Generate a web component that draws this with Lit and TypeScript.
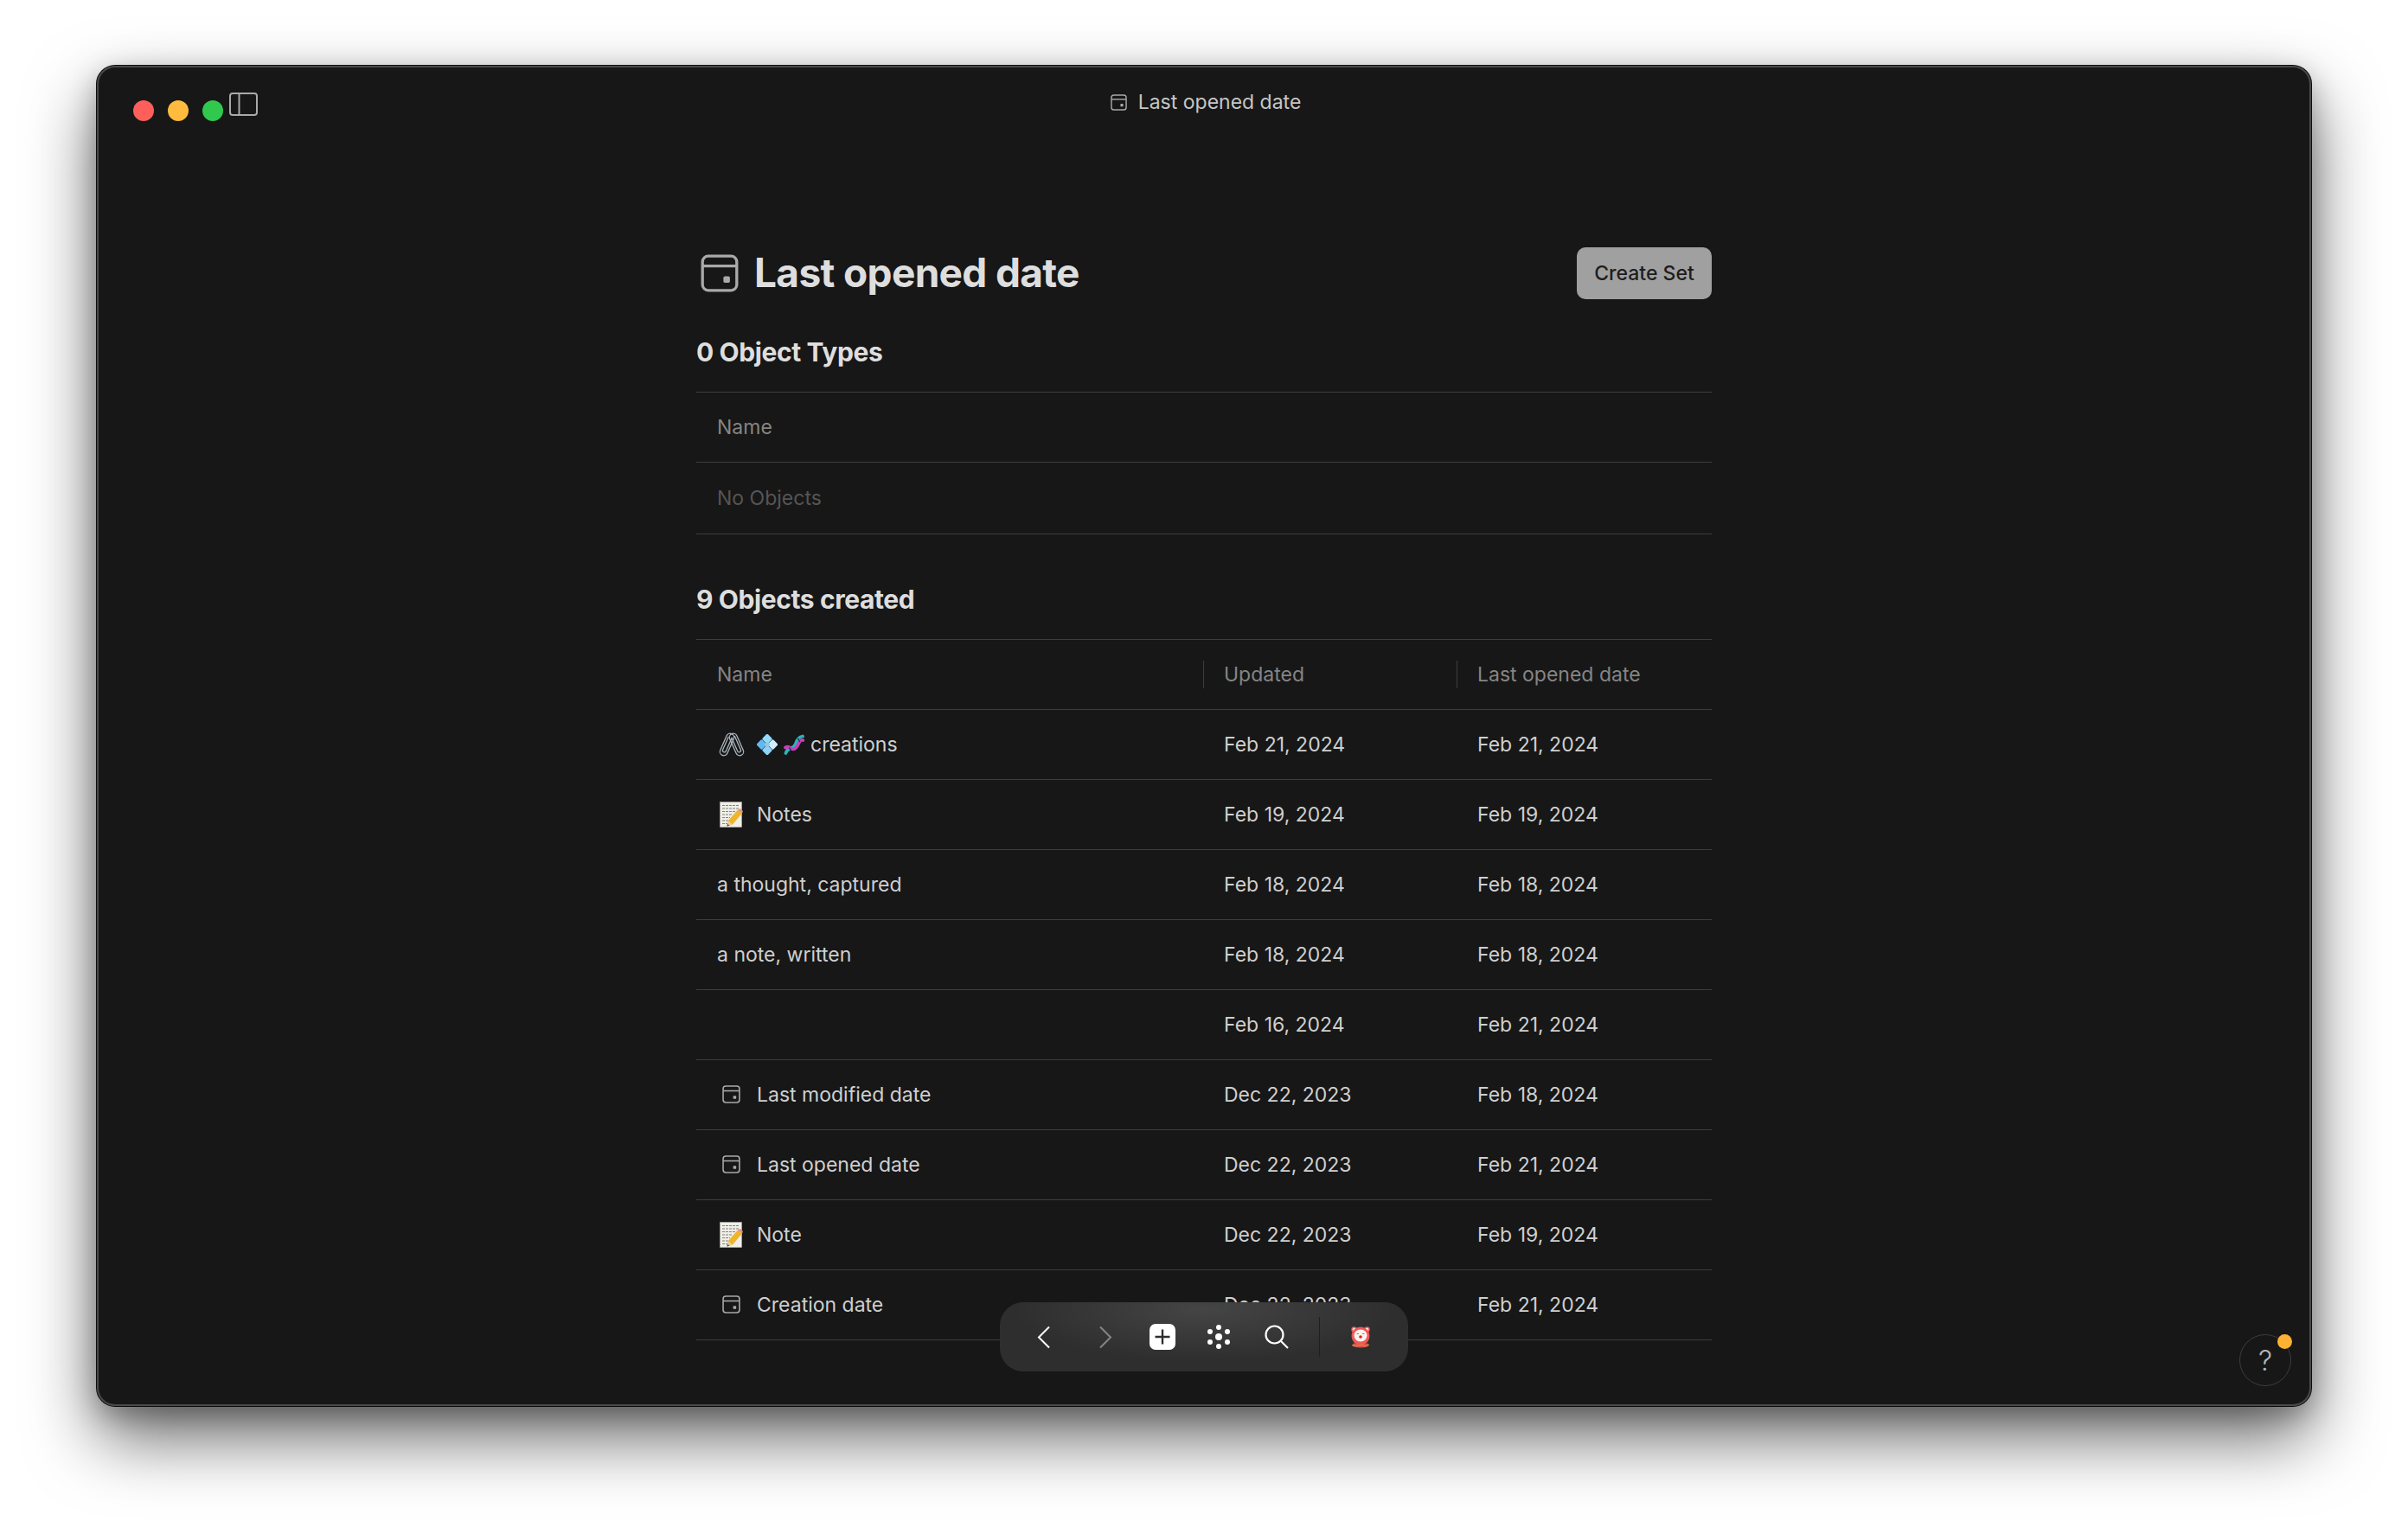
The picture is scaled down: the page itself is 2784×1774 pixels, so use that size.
import { LitElement, html, css, svg } from "lit";
import { customElement } from "lit/decorators.js";

const dateIcon = (cls: string) => html`<svg class=${cls} viewBox="0 0 20 20" fill="none">
  <rect x="1" y="1" width="18" height="18" rx="3" stroke="currentColor" stroke-width="1.5"/>
  <path d="M1 6.200H19" stroke="currentColor" stroke-width="1.5"/>
  <rect x="12" y="11.600" width="3.400" height="3.400" rx=".8" fill="currentColor"/>
</svg>`;

const memo = html`<svg class="memo" viewBox="0 0 27 30">
  <rect x=".5" y=".5" width="25" height="29" fill="#efeee8" stroke="#b5b3a8" stroke-width=".6"/>
  <path d="M3 4.500h19M3 8h20M3 11.500h16M3 15h12M3 18.500h9M3 22h7M3 25.500h8" stroke="#77756e" stroke-width=".9" stroke-dasharray="3 1"/>
  <path d="M21 9.500l5 4-11 13-6.500 2 1.500-6.500z" fill="#f0b429"/>
  <path d="M21 9.500l2.500-1.500 3.500 3-1 2.500z" fill="#e58a8a"/>
  <path d="M8.500 28.500l1.500-6.500 4.800 4.500z" fill="#e8cfa0"/>
  <path d="M8.500 28.500l.6-2.700 2.100 2z" fill="#444"/>
</svg>`;

const clipShape = svg`<rect x="-4.500" y="-13.500" width="9" height="27" rx="4.500"/><path d="M-2 -8.500V7.500a2 2 0 0 0 4 0V-9.500"/>`;
const clips = html`<svg class="clips" viewBox="0 0 30 28" fill="none" stroke="#a9b5bf" stroke-width="1.300" stroke-linecap="round">
  <g transform="translate(9.500 14) rotate(24)">${clipShape}</g>
  <g transform="translate(20.500 14) rotate(-24)">${clipShape}</g>
</svg>`;

const diamond = html`<svg class="emo" viewBox="0 0 24 24">
  <g transform="rotate(45 12 12)">
    <rect x="3" y="3" width="8.800" height="8.800" rx="1.500" fill="#8fdcff"/>
    <rect x="12.200" y="3" width="8.800" height="8.800" rx="1.500" fill="#cdf0ff"/>
    <rect x="3" y="12.200" width="8.800" height="8.800" rx="1.500" fill="#62b9f2"/>
    <rect x="12.200" y="12.200" width="8.800" height="8.800" rx="1.500" fill="#8fd2fa"/>
    <rect x="9.500" y="9.500" width="5" height="5" fill="#9fc4dc"/>
  </g>
</svg>`;

const dna = html`<svg class="emo" viewBox="0 0 24 24" fill="none" stroke-linecap="round">
  <path d="M2.500 22C5 14 12 18 14 11S19 3 22 2.500" stroke="#27b6bb" stroke-width="3.800"/>
  <path d="M2 15.500C8 12 9 21 14 16S17 6 22.500 7" stroke="#c83fb8" stroke-width="3.800"/>
  <path d="M16.500 5l2 3.500M6.500 16l2 2.500" stroke="#263a55" stroke-width="1.500"/>
</svg>`;

const bear = html`<svg class="bear" viewBox="0 0 22 25">
  <circle cx="3.500" cy="3.500" r="3.200" fill="#ee5a5a"/><circle cx="18.500" cy="3.500" r="3.200" fill="#ee5a5a"/>
  <circle cx="3.500" cy="3.200" r="1.700" fill="#fbe9e4"/><circle cx="18.500" cy="3.200" r="1.700" fill="#fbe9e4"/>
  <path d="M3 19.500h16c2.500 2 1.500 5-8 5s-10.500-3-8-5z" fill="#dd4f4d"/>
  <circle cx="11" cy="11" r="10.500" fill="#ee5a5a"/>
  <ellipse cx="11" cy="10.500" rx="7.500" ry="7" fill="#fdf3ee"/>
  <path d="M6.500 8.500h2.500M13 8.500h2.500" stroke="#666" stroke-width=".8"/>
  <circle cx="11" cy="12" r="1.800" fill="#d92323"/>
  <path d="M1 21.500c3 1.500 5 .5 7 .5s4-1.500 6 0 5 0 7-1" stroke="#c9932e" stroke-width="1.100" fill="none"/>
</svg>`;

type Row = { icon: unknown; name: string; updated: string; opened: string };
const date = dateIcon("date");
const rows: Row[] = [
  { icon: clips, name: "creations", updated: "Feb 21, 2024", opened: "Feb 21, 2024" },
  { icon: memo, name: "Notes", updated: "Feb 19, 2024", opened: "Feb 19, 2024" },
  { icon: null, name: "a thought, captured", updated: "Feb 18, 2024", opened: "Feb 18, 2024" },
  { icon: null, name: "a note, written", updated: "Feb 18, 2024", opened: "Feb 18, 2024" },
  { icon: null, name: "", updated: "Feb 16, 2024", opened: "Feb 21, 2024" },
  { icon: date, name: "Last modified date", updated: "Dec 22, 2023", opened: "Feb 18, 2024" },
  { icon: date, name: "Last opened date", updated: "Dec 22, 2023", opened: "Feb 21, 2024" },
  { icon: memo, name: "Note", updated: "Dec 22, 2023", opened: "Feb 19, 2024" },
  { icon: date, name: "Creation date", updated: "Dec 22, 2023", opened: "Feb 21, 2024" },
];

@customElement("app-root")
export class AppRoot extends LitElement {
  static styles = css`
    :host {
      display: block;
      height: 1774px;
      box-sizing: border-box;
      padding: 76px 112px 148px;
      background: #fff;
      font-family: Inter, "Liberation Sans", sans-serif;
      overflow: hidden;
    }
    .window {
      position: relative;
      height: 1550px;
      border-radius: 21px;
      background: #171717;
      box-shadow: 0 0 0 1px #0c0c0c, inset 0 0 0 2px #4a4a4a, 0 36px 80px rgba(0, 0, 0, 0.6), 0 10px 30px rgba(0,0,0,.25);
    }
    .titlebar {
      position: relative;
      height: 85px;
      display: flex;
      align-items: flex-start;
      justify-content: center;
    }
    .controls {
      position: absolute;
      left: 42px;
      top: 31px;
      display: flex;
      align-items: flex-start;
    }
    .light { width: 24px; height: 24px; border-radius: 50%; margin: 9px 16px 0 0; }
    .light.r { background: #ff5f5b; }
    .light.y { background: #ffbb3d; }
    .light.g { background: #31c94d; margin-right: 7px; }
    .panel { width: 33px; height: 27px; color: #a9a9a9; }
    .wintitle {
      display: flex;
      align-items: center;
      gap: 13px;
      margin: 26px 0 0 4px;
      height: 32px;
      font-size: 23px;
      color: #c6c6c6;
    }
    .wintitle .date { width: 19px; height: 19px; }
    .content {
      width: 1174px;
      margin: 0 auto;
      padding-top: 125px;
    }
    .head {
      display: flex;
      align-items: center;
      height: 60px;
    }
    .head .big { width: 44px; height: 44px; color: #a9a9a9; margin-left: 5px; }
    h1 {
      flex: 1;
      margin: 0 0 2px 18px;
      font-size: 46px;
      font-weight: 700;
      letter-spacing: -0.65px;
      color: #dedede;
    }
    button {
      width: 156px;
      height: 60px;
      border: 0;
      border-radius: 10px;
      background: #a0a0a0;
      color: #1d1d1d;
      font: 500 23px Inter, sans-serif;
      padding: 0;
    }
    h2 {
      margin: 41px 0 26px;
      line-height: 40px;
      font-size: 30px;
      font-weight: 700;
      letter-spacing: -0.4px;
      color: #dedede;
    }
    h2.second { margin-top: 55px; }
    .table { border-top: 1px solid #3d3d3d; }
    .row {
      display: grid;
      grid-template-columns: 586px 293px 295px;
      height: 81px;
      box-sizing: border-box;
      border-bottom: 1px solid #3d3d3d;
      font-size: 23px;
      color: #cfcfcf;
    }
    .cell {
      display: flex;
      align-items: center;
      padding-left: 24px;
      padding-bottom: 1px;
      position: relative;
      min-width: 0;
      white-space: nowrap;
    }
    .row.header { color: #858585; }
    .row.header .cell + .cell::before {
      content: "";
      position: absolute;
      left: 0;
      top: 24px;
      bottom: 24px;
      width: 1px;
      background: #3d3d3d;
    }
    .row.empty { height: 83px; color: #555; }
    .slot { width: 33px; height: 32px; margin-right: 13px; display: flex; align-items: center; justify-content: center; flex: none; }
    .memo { width: 27px; height: 30px; }
    .date { width: 21px; height: 21px; color: #a9a9a9; }
    .clips { width: 30px; height: 28px; }
    .emo { width: 24px; height: 24px; margin-right: 7px; flex: none; }
    .toolbar {
      position: absolute;
      left: 1044px;
      top: 1430px;
      width: 472px;
      height: 80px;
      border-radius: 27px;
      background: radial-gradient(ellipse 220px 60px at 50% 10%, #454545, #2e2e2e 100%);
      display: flex;
      align-items: center;
    }
    .tb { position: absolute; top: 0; height: 80px; display: flex; align-items: center; justify-content: center; }
    .tb svg { display: block; }
    .sep { position: absolute; left: 369px; top: 17px; width: 1px; height: 46px; background: #1f1f1f; }
    .bear { width: 22px; height: 25px; }
    .help {
      position: absolute;
      left: 2477px;
      top: 1467px;
      width: 60px;
      height: 60px;
      box-sizing: border-box;
      border: 1px solid #3d3d3d;
      border-radius: 50%;
      display: flex;
      align-items: center;
      justify-content: center;
      color: #b5b5b5;
      font-size: 32px;
      font-weight: 300;
    }
    .dot {
      position: absolute;
      right: -2px;
      top: -1px;
      width: 17px;
      height: 17px;
      border-radius: 50%;
      background: #ffb133;
    }
  `;

  render() {
    return html`
      <div class="window">
        <div class="titlebar">
          <div class="controls">
            <div class="light r"></div><div class="light y"></div><div class="light g"></div>
            <svg class="panel" viewBox="0 0 33 27" fill="none" stroke="currentColor" stroke-width="2">
              <rect x="1" y="1" width="31" height="25" rx="3"/><path d="M11.500 1v25"/>
            </svg>
          </div>
          <div class="wintitle">${dateIcon("date")}<span>Last opened date</span></div>
        </div>
        <div class="content">
          <div class="head">
            ${dateIcon("big")}
            <h1>Last opened date</h1>
            <button>Create Set</button>
          </div>
          <h2>0 Object Types</h2>
          <div class="table">
            <div class="row header"><div class="cell">Name</div></div>
            <div class="row empty"><div class="cell">No Objects</div></div>
          </div>
          <h2 class="second">9 Objects created</h2>
          <div class="table">
            <div class="row header">
              <div class="cell">Name</div><div class="cell">Updated</div><div class="cell">Last opened date</div>
            </div>
            ${rows.map(
              (r) => html`<div class="row">
                <div class="cell">
                  ${r.icon ? html`<span class="slot">${r.icon}</span>` : null}
                  ${r.name === "creations" ? html`${diamond}${dna}` : null}
                  <span>${r.name}</span>
                </div>
                <div class="cell">${r.updated}</div>
                <div class="cell">${r.opened}</div>
              </div>`
            )}
          </div>
        </div>
        <div class="toolbar">
          <div class="tb" style="left:43px"><svg width="15" height="27" viewBox="0 0 15 27" fill="none" stroke="#fff" stroke-width="2"><path d="M14 1.500L2 13.500l12 12"/></svg></div>
          <div class="tb" style="left:115px"><svg width="15" height="27" viewBox="0 0 15 27" fill="none" stroke="#858585" stroke-width="2"><path d="M1 1.500l12 12-12 12"/></svg></div>
          <div class="tb" style="left:173px"><svg width="30" height="30" viewBox="0 0 30 30"><rect width="30" height="30" rx="7" fill="#fff"/><path d="M15 6.500v17M6.500 15h17" stroke="#2e2e2e" stroke-width="2.400"/></svg></div>
          <div class="tb" style="left:239px"><svg width="28" height="28" viewBox="0 0 28 28" fill="#fff"><circle cx="14" cy="14" r="4"/><circle cx="14" cy="3" r="3"/><circle cx="14" cy="25" r="3"/><circle cx="4" cy="8" r="3"/><circle cx="24" cy="8" r="3"/><circle cx="4" cy="20" r="3"/><circle cx="24" cy="20" r="3"/></svg></div>
          <div class="tb" style="left:306px"><svg width="28" height="28" viewBox="0 0 28 28" fill="none" stroke="#fff" stroke-width="2.200"><circle cx="11.500" cy="11.500" r="10"/><path d="M19 19l8 8"/></svg></div>
          <div class="sep"></div>
          <div class="tb" style="left:406px">${bear}</div>
        </div>
        <div class="help">?<div class="dot"></div></div>
      </div>
    `;
  }
}
